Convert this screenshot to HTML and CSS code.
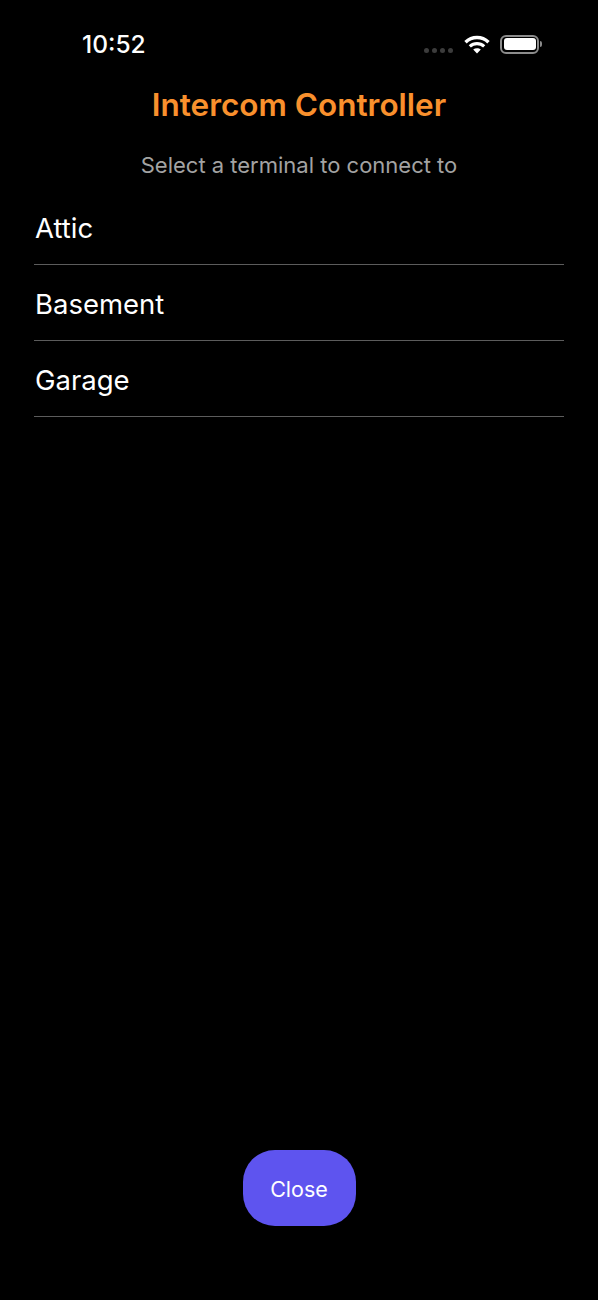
FILE: index.html
```html
<!DOCTYPE html>
<html lang="en">
<head>
  <meta charset="UTF-8">
  <meta name="viewport" content="width=device-width, initial-scale=1.0">
  <title>Intercom Controller</title>
  <link rel="stylesheet" href="styles.css">
</head>
<body>

<div class="status-bar">
  <span class="time">10:52</span>
  <div class="status-icons">
    <div class="signal">
      <span></span><span></span><span></span><span></span>
    </div>
    <svg class="wifi" width="26" height="20" viewBox="0 0 26 20">
      <path d="M1.5 7.2 C8 1 18 1 24.5 7.2" fill="none" stroke="#fff" stroke-width="3.4"/>
      <path d="M5.8 11.4 C10 7.6 16 7.6 20.2 11.4" fill="none" stroke="#fff" stroke-width="3.2"/>
      <path d="M9.2 14.6 C11.4 12.8 14.6 12.8 16.8 14.6 L13 18.6 Z" fill="#fff"/>
    </svg>
    <div class="battery">
      <div class="battery-level"></div>
    </div>
    <div class="battery-cap"></div>
  </div>
</div>

<div class="container">
  <h1>Intercom Controller</h1>
  <p class="subtitle">Select a terminal to connect to</p>

  <ul class="terminals">
    <li>Attic</li>
    <li>Basement</li>
    <li>Garage</li>
  </ul>

  <button class="close">Close</button>
</div>

</body>
</html>
```

FILE: styles.css
```css
body {
  font-family: Inter, "Liberation Sans", sans-serif;
  margin: 0;
  padding: 0;
  width: 598px;
  height: 1300px;
  background: #000;
  color: #fff;
  display: flex;
  flex-direction: column;
  overflow: hidden;
}
.status-bar {
  display: flex;
  justify-content: space-between;
  align-items: center;
  height: 30px;
  padding: 30px 56px 0 82px;
}
.time {
  margin-top: -2px;
  font-size: 24.5px;
  font-weight: 500;
  line-height: 30px;
}
.status-icons {
  display: flex;
  align-items: center;
}
.signal {
  display: flex;
  gap: 3px;
  margin: 10px 11px 0 0;
}
.signal span {
  width: 5px;
  height: 5px;
  border-radius: 50%;
  background: #3c3c3c;
}
.wifi {
  margin: 0 10px 0 0;
}
.battery {
  box-sizing: border-box;
  width: 39px;
  height: 19px;
  margin-top: -2px;
  padding: 1.5px;
  border: 2px solid #8c8c8c;
  border-radius: 6px;
}
.battery-level {
  height: 100%;
  background: #fff;
  border-radius: 3px;
}
.battery-cap {
  width: 2px;
  height: 6px;
  margin: -2px 0 0 1px;
  background: #8a8a8a;
  border-radius: 0 2px 2px 0;
}
.container {
  flex: 1;
  display: flex;
  flex-direction: column;
  padding: 0 34px 74px;
}
h1 {
  margin: 27px 0 0;
  color: #f9902d;
  font-size: 31.5px;
  font-weight: 600;
  line-height: 36px;
  text-align: center;
}
.subtitle {
  margin: 28px 0 0;
  color: #a3a3a3;
  font-size: 22px;
  line-height: 28px;
  text-align: center;
}
.terminals {
  list-style: none;
  margin: 10px 0 0;
  padding: 0;
}
.terminals li {
  box-sizing: border-box;
  height: 76px;
  padding: 22px 0 0 1px;
  border-bottom: 1px solid #5c5c5c;
  font-size: 27.5px;
  line-height: 34px;
}
.close {
  margin: auto auto 0;
  width: 113px;
  height: 76px;
  padding-top: 2px;
  border: none;
  border-radius: 32px;
  background: #5e54ef;
  color: #fff;
  font-family: inherit;
  font-size: 21.5px;
}
```
